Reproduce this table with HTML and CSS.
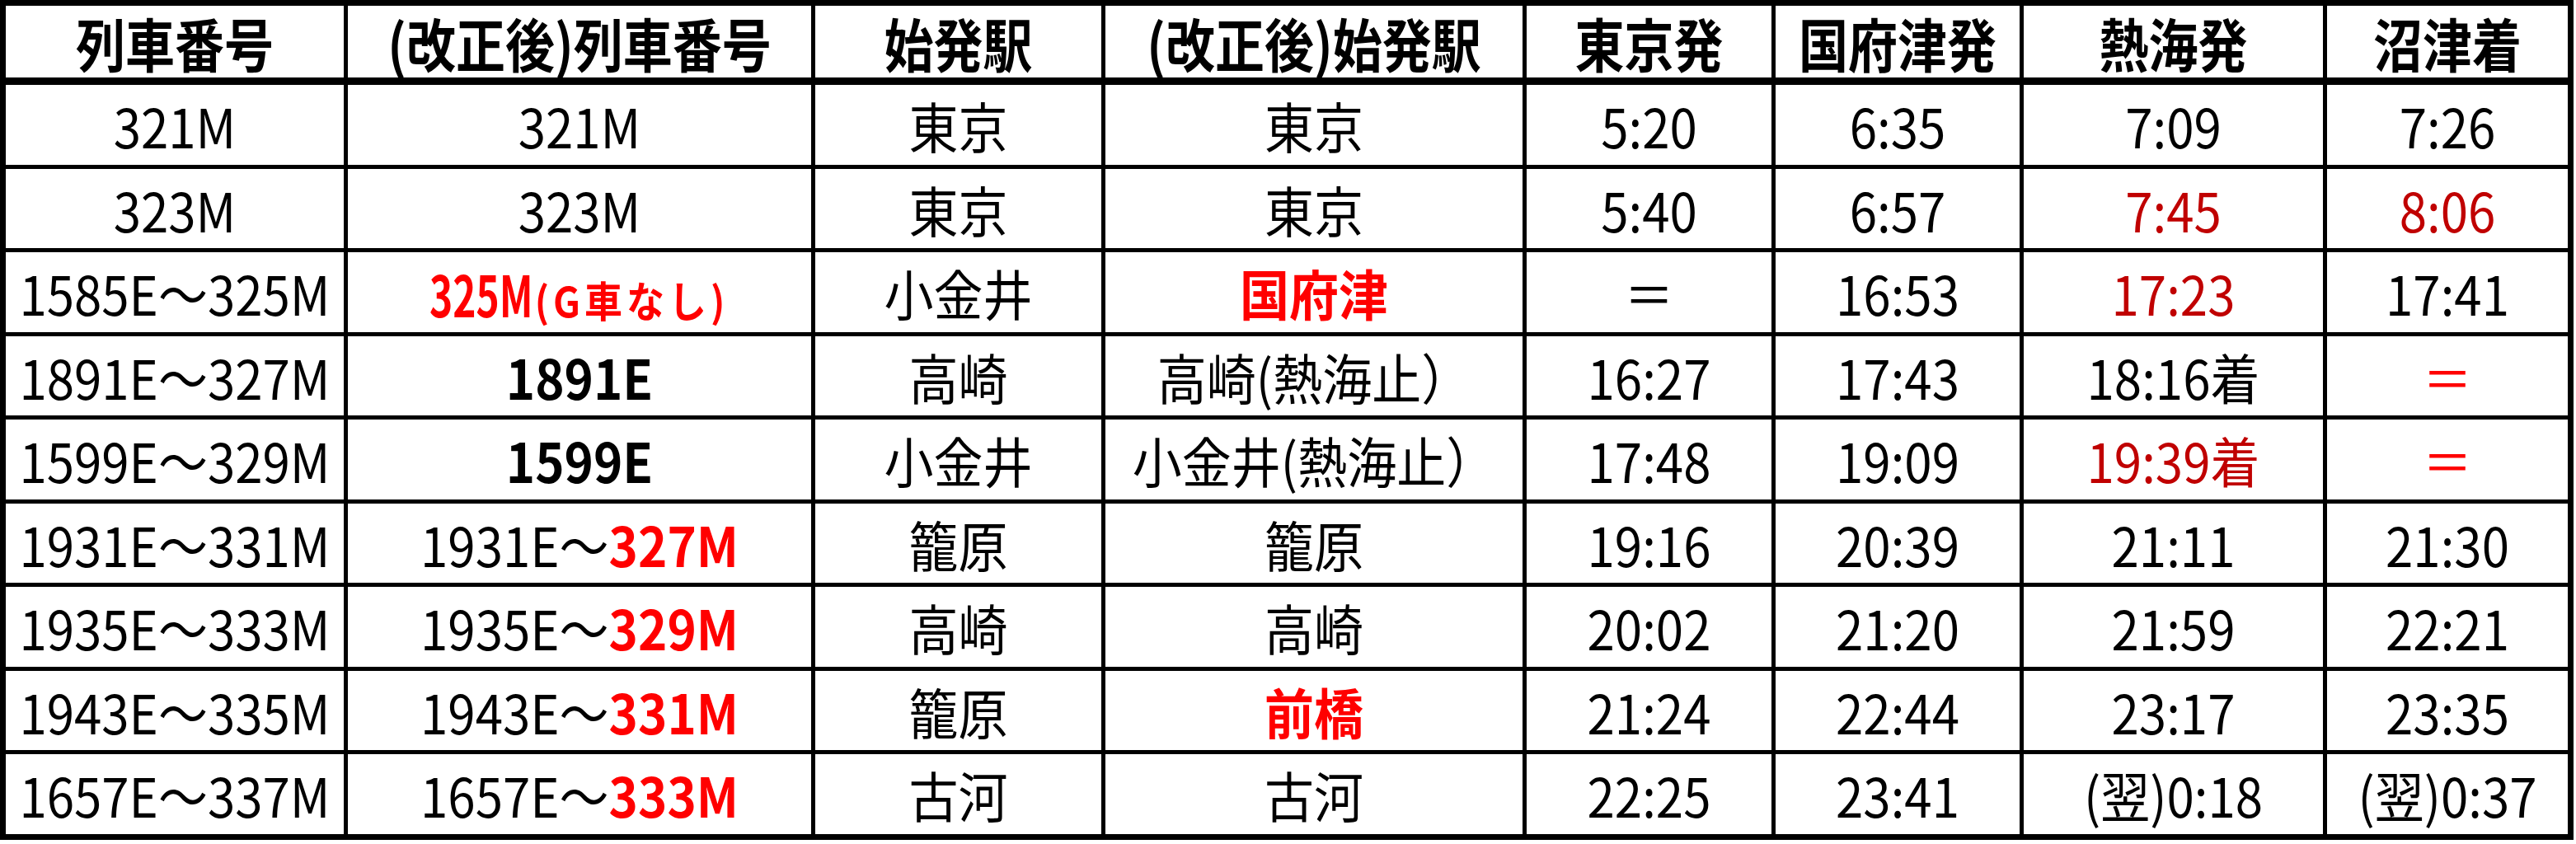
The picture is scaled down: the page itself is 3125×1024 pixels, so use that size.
FILE: index.html
```html
<!DOCTYPE html>
<html lang="ja">
<head>
<meta charset="utf-8">
<title>列車番号</title>
<link rel="stylesheet" href="styles.css">
</head>
<body>
<div class="sheet">
  <div class="cell head"><span class="t">列車番号</span></div>
  <div class="cell head"><span class="t">(改正後)列車番号</span></div>
  <div class="cell head"><span class="t">始発駅</span></div>
  <div class="cell head"><span class="t">(改正後)始発駅</span></div>
  <div class="cell head"><span class="t">東京発</span></div>
  <div class="cell head"><span class="t">国府津発</span></div>
  <div class="cell head"><span class="t">熱海発</span></div>
  <div class="cell head"><span class="t">沼津着</span></div>

  <div class="cell"><span class="t">321M</span></div>
  <div class="cell"><span class="t">321M</span></div>
  <div class="cell"><span class="t">東京</span></div>
  <div class="cell"><span class="t">東京</span></div>
  <div class="cell"><span class="t">5:20</span></div>
  <div class="cell"><span class="t">6:35</span></div>
  <div class="cell"><span class="t">7:09</span></div>
  <div class="cell"><span class="t">7:26</span></div>

  <div class="cell"><span class="t">323M</span></div>
  <div class="cell"><span class="t">323M</span></div>
  <div class="cell"><span class="t">東京</span></div>
  <div class="cell"><span class="t">東京</span></div>
  <div class="cell"><span class="t">5:40</span></div>
  <div class="cell"><span class="t">6:57</span></div>
  <div class="cell red"><span class="t">7:45</span></div>
  <div class="cell red"><span class="t">8:06</span></div>

  <div class="cell"><span class="t">1585E～325M</span></div>
  <div class="cell"><span class="t"><span class="hot narrow">325M</span><span class="hot small">(G車なし)</span></span></div>
  <div class="cell"><span class="t">小金井</span></div>
  <div class="cell"><span class="t hot">国府津</span></div>
  <div class="cell"><span class="t">＝</span></div>
  <div class="cell"><span class="t">16:53</span></div>
  <div class="cell red"><span class="t">17:23</span></div>
  <div class="cell"><span class="t">17:41</span></div>

  <div class="cell"><span class="t">1891E～327M</span></div>
  <div class="cell"><span class="t strong">1891E</span></div>
  <div class="cell"><span class="t">高崎</span></div>
  <div class="cell"><span class="t">高崎(熱海止）</span></div>
  <div class="cell"><span class="t">16:27</span></div>
  <div class="cell"><span class="t">17:43</span></div>
  <div class="cell"><span class="t">18:16着</span></div>
  <div class="cell eq"><span class="t">＝</span></div>

  <div class="cell"><span class="t">1599E～329M</span></div>
  <div class="cell"><span class="t strong">1599E</span></div>
  <div class="cell"><span class="t">小金井</span></div>
  <div class="cell"><span class="t">小金井(熱海止）</span></div>
  <div class="cell"><span class="t">17:48</span></div>
  <div class="cell"><span class="t">19:09</span></div>
  <div class="cell red"><span class="t">19:39着</span></div>
  <div class="cell eq"><span class="t">＝</span></div>

  <div class="cell"><span class="t">1931E～331M</span></div>
  <div class="cell"><span class="t">1931E～<span class="hot">327M</span></span></div>
  <div class="cell"><span class="t">籠原</span></div>
  <div class="cell"><span class="t">籠原</span></div>
  <div class="cell"><span class="t">19:16</span></div>
  <div class="cell"><span class="t">20:39</span></div>
  <div class="cell"><span class="t">21:11</span></div>
  <div class="cell"><span class="t">21:30</span></div>

  <div class="cell"><span class="t">1935E～333M</span></div>
  <div class="cell"><span class="t">1935E～<span class="hot">329M</span></span></div>
  <div class="cell"><span class="t">高崎</span></div>
  <div class="cell"><span class="t">高崎</span></div>
  <div class="cell"><span class="t">20:02</span></div>
  <div class="cell"><span class="t">21:20</span></div>
  <div class="cell"><span class="t">21:59</span></div>
  <div class="cell"><span class="t">22:21</span></div>

  <div class="cell"><span class="t">1943E～335M</span></div>
  <div class="cell"><span class="t">1943E～<span class="hot">331M</span></span></div>
  <div class="cell"><span class="t">籠原</span></div>
  <div class="cell"><span class="t hot">前橋</span></div>
  <div class="cell"><span class="t">21:24</span></div>
  <div class="cell"><span class="t">22:44</span></div>
  <div class="cell"><span class="t">23:17</span></div>
  <div class="cell"><span class="t">23:35</span></div>

  <div class="cell"><span class="t">1657E～337M</span></div>
  <div class="cell"><span class="t">1657E～<span class="hot">333M</span></span></div>
  <div class="cell"><span class="t">古河</span></div>
  <div class="cell"><span class="t">古河</span></div>
  <div class="cell"><span class="t">22:25</span></div>
  <div class="cell"><span class="t">23:41</span></div>
  <div class="cell"><span class="t">(翌)0:18</span></div>
  <div class="cell"><span class="t">(翌)0:37</span></div>
</div>
</body>
</html>
```

FILE: styles.css
```css
html, body {
  margin: 0;
  padding: 0;
  background: #ffffff;
}

.sheet {
  display: grid;
  width: 3122px;
  box-sizing: border-box;
  grid-template-columns: 410px 562px 347px 506px 297px 296px 363px 292px;
  grid-template-rows: 91px repeat(9, 96.5px);
  gap: 5px;
  padding: 7px;
  background: #000000;
  font-family: "Noto Sans CJK JP", "Noto Sans", sans-serif;
  color: #000000;
}

.cell {
  background: #ffffff;
  display: flex;
  align-items: center;
  justify-content: center;
  font-size: 60px;
  font-weight: 400;
  line-height: 1;
  white-space: nowrap;
}

.t {
  display: inline-block;
  line-height: 1;
  transform: scaleY(1.1);
}

.head {
  font-weight: 700;
  font-size: 60px;
  border-bottom: 4px solid #000000;
  box-sizing: border-box;
}

.head .t {
  transform: scaleY(1.18);
}

.red {
  color: #c00000;
}

.eq {
  color: #ff0000;
}

.hot {
  color: #ff0000;
  font-weight: 700;
}

.narrow {
  display: inline-block;
  font-size: 63px;
  transform: scaleX(0.76);
  transform-origin: left center;
  margin-right: -38px;
}

.small {
  font-size: 46px;
  letter-spacing: 5px;
}

.strong {
  font-weight: 700;
}
```
